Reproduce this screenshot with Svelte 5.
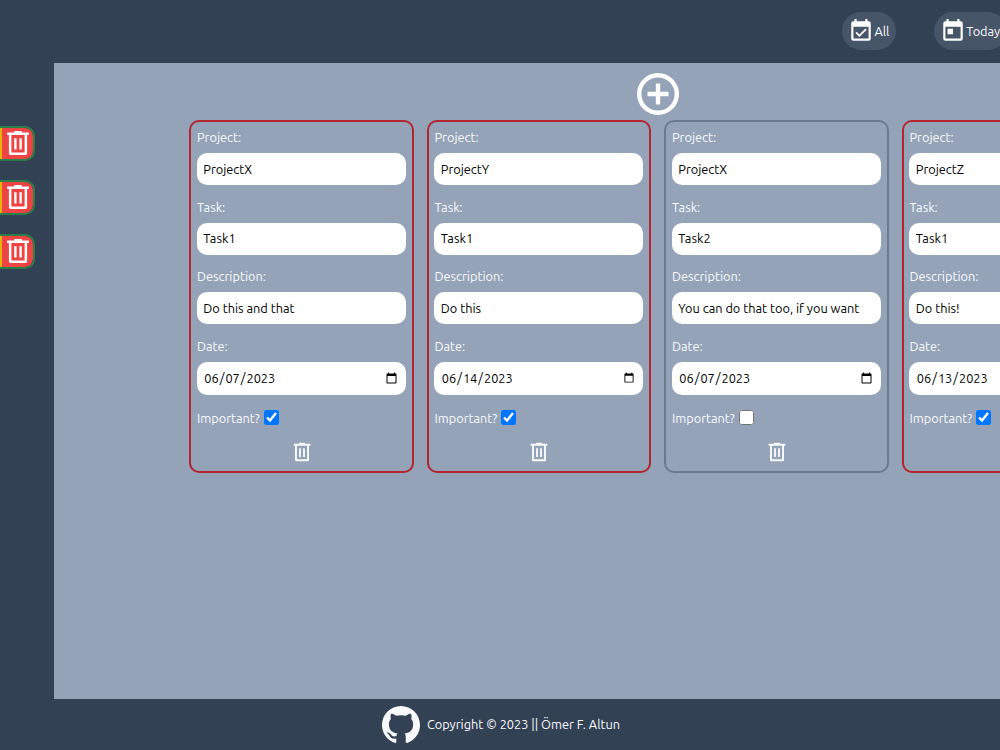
<script>
	let projects = ["ProjectX", "ProjectY", "ProjectZ"];

	let tasks = [
		{ project: "ProjectX", task: "Task1", description: "Do this and that", date: "2023-06-07", important: true },
		{ project: "ProjectY", task: "Task1", description: "Do this", date: "2023-06-14", important: true },
		{ project: "ProjectX", task: "Task2", description: "You can do that too, if you want", date: "2023-06-07", important: false },
		{ project: "ProjectZ", task: "Task1", description: "Do this!", date: "2023-06-13", important: true },
	];

	const addTask = () => {
		tasks = [...tasks, { project: "", task: "", description: "", date: "", important: false }];
	};

	const removeTask = (task) => {
		tasks = tasks.filter((t) => t !== task);
	};

	const removeProject = (name) => {
		projects = projects.filter((p) => p !== name);
		tasks = tasks.filter((t) => t.project !== name);
	};
</script>

<div class="page">
	<header>
		<button class="filter">
			<svg viewBox="0 0 24 24"><path d="M19 3h-1V1h-2v2H8V1H6v2H5a2 2 0 0 0-2 2v14a2 2 0 0 0 2 2h14a2 2 0 0 0 2-2V5a2 2 0 0 0-2-2zm0 16H5V8h14v11zm-8.500-1.500 6.700-6.700-1.100-1.100-5.600 5.600-2.500-2.500-1.100 1.100z" /></svg>
			<span>All</span>
		</button>
		<button class="filter">
			<svg viewBox="0 0 24 24"><path d="M19 3h-1V1h-2v2H8V1H6v2H5a2 2 0 0 0-2 2v14a2 2 0 0 0 2 2h14a2 2 0 0 0 2-2V5a2 2 0 0 0-2-2zm0 16H5V8h14v11zM7 10h5v5H7z" /></svg>
			<span>Today</span>
		</button>
	</header>

	<div class="middle">
		<aside>
			{#each projects as project}
				<div class="project">
					<div class="edit"></div>
					<button class="delete" aria-label="Delete {project}" on:click={() => removeProject(project)}>
						<svg viewBox="0 0 24 24"><path fill-rule="evenodd" d="M8.500 1h7v1.200H22v2.300h-1.600V21.500a1.500 1.500 0 0 1-1.500 1.500H5.100a1.500 1.500 0 0 1-1.500-1.500V4.500H2V2.200h6.500zM5.900 4.500v16.200h12.200V4.500zM8.500 7.500h2.200v10.500H8.500zM13.300 7.500h2.200v10.500h-2.200z" /></svg>
					</button>
				</div>
			{/each}
		</aside>

		<main>
			<button class="add" aria-label="Add task" on:click={addTask}>
				<svg viewBox="0 0 42 42">
					<circle cx="21" cy="21" r="18.800" />
					<path d="M21 10.500v21M10.500 21h21" />
				</svg>
			</button>
			<div class="cards">
				{#each tasks as task}
					<div class="card" class:important={task.important}>
						<label>
							<span>Project:</span>
							<input type="text" bind:value={task.project} />
						</label>
						<label>
							<span>Task:</span>
							<input type="text" bind:value={task.task} />
						</label>
						<label>
							<span>Description:</span>
							<input type="text" bind:value={task.description} />
						</label>
						<label>
							<span>Date:</span>
							<input type="date" bind:value={task.date} />
						</label>
						<label class="check">
							<span>Important?</span>
							<input type="checkbox" bind:checked={task.important} />
						</label>
						<button class="trash" aria-label="Delete task" on:click={() => removeTask(task)}>
							<svg viewBox="0 0 24 24"><path fill-rule="evenodd" d="M8.500 1h7v1.200H22v2.300h-1.600V21.500a1.500 1.500 0 0 1-1.500 1.500H5.100a1.500 1.500 0 0 1-1.500-1.500V4.500H2V2.200h6.500zM5.900 4.500v16.200h12.200V4.500zM8.500 7.500h2.200v10.500H8.500zM13.300 7.500h2.200v10.500h-2.200z" /></svg>
						</button>
					</div>
				{/each}
			</div>
		</main>
	</div>

	<footer>
		<svg viewBox="0 0 16 16"><path d="M8 0C3.580 0 0 3.580 0 8c0 3.540 2.290 6.530 5.470 7.590.4.070.55-.17.55-.38 0-.19-.01-.82-.01-1.490-2.010.37-2.530-.49-2.690-.94-.09-.23-.48-.94-.82-1.130-.28-.15-.68-.52-.01-.53.63-.01 1.080.58 1.230.82.72 1.210 1.870.87 2.330.66.070-.52.28-.87.51-1.070-1.780-.2-3.640-.89-3.640-3.950 0-.87.31-1.590.82-2.150-.08-.2-.36-1.020.08-2.120 0 0 .67-.21 2.200.82.64-.18 1.320-.27 2-.27s1.360.09 2 .27c1.530-1.040 2.200-.82 2.200-.82.44 1.100.16 1.920.08 2.120.51.56.82 1.270.82 2.150 0 3.070-1.870 3.750-3.650 3.950.29.25.54.73.54 1.480 0 1.070-.01 1.930-.01 2.200 0 .21.15.46.55.38A8.010 8.010 0 0 0 16 8c0-4.420-3.580-8-8-8z" /></svg>
		<span>Copyright © 2023 || Ömer F. Altun</span>
	</footer>
</div>

<style>
	:global(body) {
		margin: 0;
		overflow: hidden;
	}

	.page {
		width: 1000px;
		height: 750px;
		display: flex;
		flex-direction: column;
		overflow: hidden;
		background: #334155;
		color: #f8fafc;
		font-family: Ubuntu, "Noto Sans", sans-serif;
		font-size: 12.75px;
	}

	button {
		border: none;
		padding: 0;
		background: none;
		color: inherit;
		font: inherit;
		cursor: pointer;
	}

	svg {
		display: block;
		flex: none;
		fill: currentColor;
	}

	header {
		height: 63px;
		flex: none;
		box-sizing: border-box;
		padding: 12px 0 0 842.4px;
		display: flex;
		gap: 37.8px;
	}

	.filter {
		height: 38px;
		flex: none;
		padding: 0 7px 0 6px;
		border-radius: 19px;
		background: #475569;
		display: flex;
		align-items: center;
	}

	.filter svg {
		width: 26px;
		height: 26px;
		color: #fff;
	}

	.filter span {
		padding-bottom: 1px;
	}

	.middle {
		height: 636px;
		flex: none;
		display: flex;
	}

	aside {
		width: 54.4px;
		flex: none;
		box-sizing: border-box;
		padding: 63px 19px 0 0;
		display: flex;
		flex-direction: column;
		align-items: flex-end;
		gap: 19px;
	}

	.project {
		width: 160px;
		height: 35px;
		box-sizing: border-box;
		border: 2px solid #2a8048;
		border-radius: 10px;
		display: flex;
		overflow: hidden;
	}

	.edit {
		flex: 1;
		background: #eab308;
	}

	.delete {
		width: 31px;
		padding: 0 0 1px 3px;
		background: #ef4444;
		color: #fff;
		border-radius: 0 8px 8px 0;
	}

	.delete svg {
		width: 26px;
		height: 26px;
	}

	main {
		width: 1207px;
		flex: none;
		background: #94a3b8;
		display: flex;
		flex-direction: column;
		align-items: center;
	}

	.add {
		margin-top: 10px;
	}

	.add svg {
		width: 42px;
		height: 42px;
		fill: none;
		stroke: #fff;
		stroke-width: 4.400;
	}

	.cards {
		margin-top: 5px;
		display: flex;
		gap: 13px;
	}

	.card {
		width: 224.5px;
		height: 352.5px;
		box-sizing: border-box;
		padding: 6px 5.6px;
		border: 2px solid #6b7a8c;
		border-radius: 10px;
		display: flex;
		flex-direction: column;
	}

	.card.important {
		border-color: #b3252f;
	}

	label {
		height: 69.6px;
		flex: none;
		display: flex;
		flex-direction: column;
	}

	label span {
		height: 18px;
		line-height: 18px;
		margin-bottom: 7px;
	}

	input[type="text"],
	input[type="date"] {
		width: 209px;
		height: 32px;
		box-sizing: border-box;
		padding: 0 6px 1px 6.3px;
		border: none;
		border-radius: 10px;
		background: #fff;
		color: #000;
		font: inherit;
	}

	input[type="date"] {
		height: 33px;
		padding-bottom: 0;
	}

	.check {
		height: 20px;
		margin-top: 1.4px;
		flex-direction: row;
		align-items: center;
		gap: 4px;
	}

	.check span {
		margin: 0;
	}

	.check input {
		width: 15px;
		height: 15px;
		margin: 0;
	}

	.trash {
		align-self: center;
		margin-top: 14.6px;
	}

	.trash svg {
		width: 20px;
		height: 20px;
	}

	footer {
		height: 51px;
		padding-left: 2px;
		display: flex;
		align-items: center;
		justify-content: center;
		gap: 7px;
	}

	footer svg {
		width: 38px;
		height: 38px;
	}

	footer span {
		padding-bottom: 1px;
	}
</style>
